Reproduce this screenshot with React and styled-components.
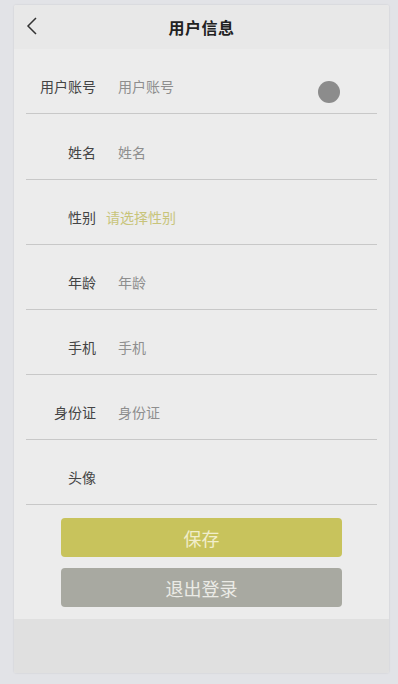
import React from "react";
import styled, { createGlobalStyle } from "styled-components";

const GlobalStyle = createGlobalStyle`
    html, body {
        margin: 0;
        padding: 0;
        background: #e2e3e7;
        font-family: "Noto Sans CJK SC", "Noto Sans", sans-serif;
    }
`

const Page = styled.div`
    width: 398px;
    height: 684px;
    padding: 5px 9px 11px 14px;
    box-sizing: border-box;
`

const Card = styled.div`
    height: 100%;
    display: flex;
    flex-direction: column;
    background: #ececec;
    border-radius: 2px;
    box-shadow: 0 0 2px rgba(0, 0, 0, 0.12);
    overflow: hidden;
`

const Header = styled.div`
    height: 44px;
    flex-shrink: 0;
    display: flex;
    align-items: center;
    justify-content: center;
    position: relative;
    background: #e8e8e8;
    h1{
        margin: 0;
        font-size: 16px;
        font-weight: 700;
        color: #222;
        letter-spacing: 0.5px;
    }
    .back{
        position: absolute;
        left: 12px;
        top: 11px;
    }
`

const Form = styled.div`
    padding: 0 12px;
`

const Row = styled.div`
    height: ${props => props.h}px;
    display: flex;
    align-items: center;
    padding-top: 10px;
    box-sizing: border-box;
    border-bottom: 1px solid #c8c8c8;
    position: relative;
`

const Label = styled.span`
    width: 70px;
    text-align: right;
    font-size: 14px;
    color: #444;
    flex-shrink: 0;
`

const Value = styled.span`
    margin-left: ${props => props.tight ? "10px" : "22px"};
    font-size: 14px;
    color: ${props => props.accent ? "#c8c47a" : "#8e8e8e"};
`

const Dot = styled.div`
    position: absolute;
    right: 37px;
    top: 32px;
    width: 22px;
    height: 22px;
    border-radius: 50%;
    background: #8c8c8c;
    filter: blur(0.6px);
`

const Buttons = styled.div`
    display: flex;
    flex-direction: column;
    align-items: center;
    gap: 11px;
    padding: 13px 0 12px;
`

const Button = styled.div`
    width: 281px;
    height: 39px;
    border-radius: 4px;
    display: flex;
    align-items: center;
    justify-content: center;
    font-size: 18px;
    background: ${props => props.gray ? "#a8a9a1" : "#c8c35c"};
    color: ${props => props.gray ? "#ebebe6" : "#f1eecb"};
`

const Footer = styled.div`
    flex: 1;
    background: #e0e0e0;
`

const fields = [
    { label: "用户账号", value: "用户账号", dot: true, h: 65 },
    { label: "姓名", value: "姓名", h: 66 },
    { label: "性别", value: "请选择性别", accent: true, h: 65 },
    { label: "年龄", value: "年龄", h: 65 },
    { label: "手机", value: "手机", h: 65 },
    { label: "身份证", value: "身份证", h: 65 },
    { label: "头像", value: "", h: 65 },
]

const App = () => {
    return (
        <>
            <GlobalStyle />
            <Page>
                <Card>
                    <Header>
                        <svg className='back' width="14" height="20" viewBox="0 0 14 20">
                            <path d="M10 2 L2 10 L10 18" fill="none" stroke="#333" strokeWidth="1.5" />
                        </svg>
                        <h1>用户信息</h1>
                    </Header>
                    <Form>
                        {fields.map(f => (
                            <Row key={f.label} h={f.h}>
                                <Label>{f.label}</Label>
                                {f.value && <Value accent={f.accent} tight={f.accent}>{f.value}</Value>}
                                {f.dot && <Dot />}
                            </Row>
                        ))}
                    </Form>
                    <Buttons>
                        <Button>保存</Button>
                        <Button gray>退出登录</Button>
                    </Buttons>
                    <Footer />
                </Card>
            </Page>
        </>
    )
}

export default App;
